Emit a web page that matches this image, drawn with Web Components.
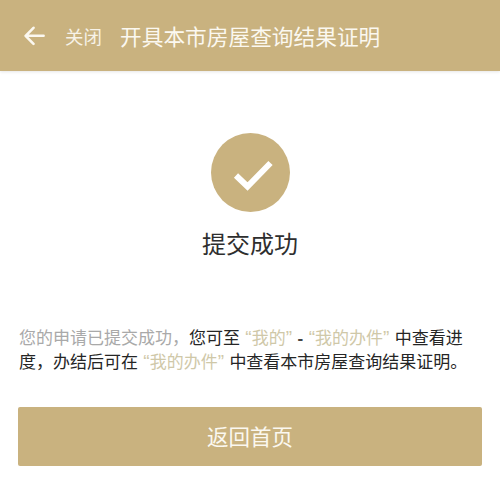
<!doctype html>
<html lang="zh-CN">
<head>
<meta charset="utf-8">
<title>提交成功</title>
<style>
html,body{margin:0;padding:0;background:#fff}
body{width:500px;height:494px;overflow:hidden;font-family:"Noto Sans CJK SC","Noto Sans",sans-serif}
</style>
</head>
<body>
<app-header label="关闭">开具本市房屋查询结果证明</app-header>
<result-status>提交成功</result-status>
<notice-text>
<span class="m">您的申请已提交成功，</span>您可至<q-link>我的</q-link><span class="d">-</span><q-link>我的办件</q-link>中查看进度，办结后可在<q-link>我的办件</q-link>中查看本市房屋查询结果证明。
</notice-text>
<primary-button>返回首页</primary-button>
<script>
const def=(name,html,attrs)=>customElements.define(name,class extends HTMLElement{
  connectedCallback(){
    if(this.shadowRoot)return;
    const r=this.attachShadow({mode:'open'});
    r.innerHTML=html;
    if(attrs)attrs(this,r);
  }
});
def('app-header',`<style>
:host{display:flex;align-items:center;height:71px;background:#c9b27f;color:#fbf8f0;box-shadow:0 1px 3px rgba(0,0,0,.10);position:relative;padding-left:24px;box-sizing:border-box}
svg{display:block;width:21px;height:20px;flex:none}
.close{margin-left:20px;font-size:18.5px;width:37px;white-space:nowrap;opacity:.92}
.title{margin-left:18px;font-size:21.7px;white-space:nowrap}
</style>
<svg viewBox="0 0 21 20" fill="none" stroke="currentColor" stroke-width="2.6" stroke-linecap="round" stroke-linejoin="round"><path d="M9.5 1.8 1.6 9.8l7.9 8M2 9.8h17.6"/></svg>
<span class="close" id="c"></span><span class="title"><slot></slot></span>`,(h,r)=>{r.getElementById('c').textContent=h.getAttribute('label')});
def('result-status',`<style>
:host{display:flex;flex-direction:column;align-items:center;padding-top:62px;color:#2e2e2e}
svg{display:block;width:79px;height:79px}
.t{margin-top:14px;font-size:24px;line-height:34px;font-weight:400;white-space:nowrap}
</style>
<svg viewBox="0 0 79 79"><circle cx="39.5" cy="39.5" r="39.5" fill="#c9b27f"/><path d="M25 42.5 36.5 53.5 59.5 30" fill="none" stroke="#fff" stroke-width="6"/></svg>
<div class="t"><slot></slot></div>`);
def('q-link',`<style>
:host{display:inline;color:#cfc8a8}
.q{display:inline-block;width:11.7px;font-family:"Liberation Sans",sans-serif;font-size:19px;line-height:1}
.l{text-align:right}
</style><span class="q l">“</span><slot></slot><span class="q">”</span>`);
def('notice-text',`<style>
:host{display:block;margin:65px 18px 0 19px;font-size:17px;line-height:24px;color:#252525}
::slotted(.m){color:#a9a9a9}
::slotted(.d){display:inline-block;width:6px;text-align:center;font-family:"Liberation Sans",sans-serif;font-weight:700;line-height:1;color:#444}
</style><slot></slot>`);
def('primary-button',`<style>
:host{display:flex;align-items:center;justify-content:center;margin:34px 18px 0;height:59px;padding-bottom:2px;box-sizing:border-box;background:#c9b27f;border-radius:2px;color:#fbf8f0;font-size:21.5px}
</style><slot></slot>`);
</script>
</body>
</html>
